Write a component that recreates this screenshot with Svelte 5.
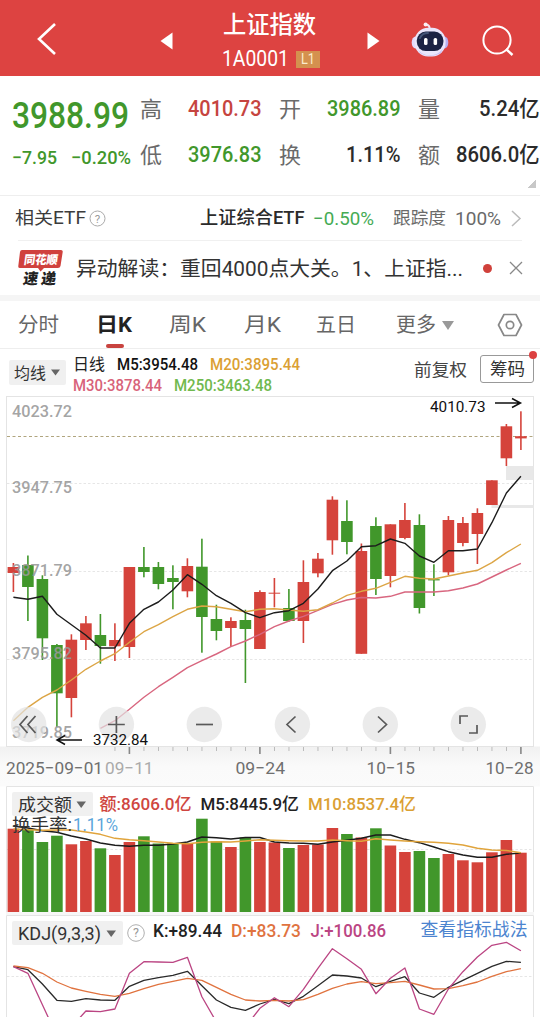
<script>
  const RED = '#d5433b';
  const GREEN = '#41972b';
  const X0 = 13.4;
  const STEP = 14.5;
  const cx = (i) => X0 + STEP * i;

  // direction, body top, body bottom, wick top, wick bottom
  const candles = [
    ['r', 567, 573, 563, 592], ['g', 565, 587, 555.5, 621], ['g', 579, 638.3, 575.3, 660],
    ['g', 645, 693.3, 644, 727], ['r', 639.7, 698, 634.3, 717.3], ['r', 623.3, 640, 616, 650],
    ['g', 635, 646, 614, 663.7], ['r', 640, 646.3, 623.3, 661], ['r', 567, 647, 567, 658],
    ['g', 567, 572, 547, 577.3], ['g', 567, 584, 562, 589.3], ['g', 578, 582, 565.3, 609.3],
    ['r', 566, 591.3, 558.3, 597.3], ['g', 566.7, 617, 538.7, 652.7], ['g', 619, 631, 604.7, 640.3],
    ['r', 621, 628, 617.3, 647], ['g', 620, 629, 609.7, 683], ['r', 592, 649, 590.3, 649],
    ['r', 592.7, 593.7, 578, 607.3], ['g', 608, 621, 589, 621.7], ['r', 582, 621, 560.3, 643],
    ['r', 558.7, 573.3, 553, 577.3], ['r', 499.7, 540.3, 496.3, 554.7], ['g', 521, 542, 500.3, 554.3],
    ['r', 551, 653.8, 543.5, 653.8], ['g', 526, 579, 517.3, 595], ['r', 524.3, 576, 524.3, 587.3],
    ['r', 520, 538, 503, 539.3], ['g', 525, 608, 514.3, 613.5], ['g', 579.2, 580.4, 564.3, 596],
    ['r', 520, 572.3, 516, 575.3], ['r', 523, 543, 517, 546.3], ['r', 513, 534, 508.3, 564],
    ['r', 480.3, 505, 480.3, 505], ['r', 426.3, 458.3, 424, 466], ['r', 436.2, 438.4, 411.3, 450]
  ];
  const ma5 = [597.3, 599.3, 596.3, 614.3, 624.7, 635.3, 648, 648, 623.3, 609.3, 602, 590, 574.7, 584.3, 595.7, 603.3, 612.7, 617.7, 612.7, 610.7, 603.3, 589, 570.7, 561, 546.7, 545.7, 539, 543.3, 556, 562.3, 550.7, 550.7, 549, 522.7, 493, 476.3];
  const ma20 = [720.7, 707.3, 697.3, 690, 680, 669.3, 661, 653.7, 642.3, 631.7, 624.7, 616.7, 609.3, 606, 606.7, 609.3, 611.7, 609.3, 608.7, 610, 611.3, 609.7, 603, 595.3, 591.3, 588.3, 582.3, 576.3, 578.3, 579, 576, 573, 570.3, 562.7, 552.7, 544];
  const ma30 = [728.3, 720.7, 709.3, 697.3, 686.7, 677.3, 667.7, 660.7, 654, 646.7, 641, 634.3, 626.7, 621, 616.3, 610.3, 604.3, 600, 597.5, 598, 596.3, 592, 592, 592, 590.7, 588, 584, 577, 570, 563.3];

  const volumes = [['r', 828.7], ['g', 830], ['g', 842], ['g', 835.7], ['r', 844.3], ['r', 841], ['g', 848.3], ['r', 855], ['r', 842], ['g', 836.3], ['g', 843.5], ['g', 843.5], ['r', 843], ['g', 818.7], ['g', 841.5], ['r', 847], ['g', 837.5], ['r', 842], ['r', 842.5], ['g', 848], ['r', 845], ['r', 844.5], ['r', 828], ['g', 834], ['r', 837.5], ['g', 828.3], ['r', 845.5], ['r', 852], ['g', 851], ['g', 858], ['r', 854], ['r', 860.3], ['r', 862.3], ['r', 852.3], ['r', 840], ['r', 852.7]];
  const vol5 = [826, 828, 830.7, 832.3, 836, 839, 843, 845.3, 846.3, 845.3, 845.3, 844, 842, 837, 837.7, 839, 837.5, 837.5, 842, 843, 843.3, 844.3, 842, 840.3, 838.3, 835, 835, 839.3, 842.7, 847, 851.7, 855, 857.3, 857.3, 854.3, 853];
  const vol10 = [829, 829.7, 830.3, 830, 830, 832, 834.3, 838.3, 839.7, 840.7, 842, 843.3, 843.7, 842.3, 841.7, 842, 841, 839.7, 840.3, 840.7, 841, 841, 840, 840.7, 841.3, 838.7, 840, 841, 841.7, 842.3, 843.3, 845, 848.3, 850, 850.5, 852.7];

  const kLine = [966.7, 969.7, 984, 1000.3, 1001.3, 998.7, 1000, 1000.3, 986.3, 980.3, 977.7, 975.3, 971.3, 985.7, 1000, 1007.3, 1010.3, 1004, 999.3, 1003.7, 996.3, 985.7, 975, 976, 978, 986.7, 981.3, 976.7, 993, 997.3, 987.3, 980.3, 973.3, 966.3, 961.3, 962.3];
  const dLine = [966, 967.7, 973.3, 982, 988, 991.3, 994.3, 996.3, 993.3, 988.7, 984.3, 981.3, 978.3, 980.3, 987.3, 994.3, 1000, 1001, 1000.3, 1001, 999.7, 994.3, 988.3, 984, 981.7, 983.7, 982.7, 981.3, 985, 989, 988.7, 985.7, 982, 976.3, 971.7, 968.7];
  const jLine = [966.7, 973.3, 1004.7, 1036, 1027, 1011, 1011.7, 1009, 973.3, 961.7, 962, 962.3, 957.3, 996.7, 1022, 1032, 1027, 1008.3, 997.7, 1006.7, 989.3, 968.3, 948.7, 958.7, 969.3, 993.7, 978.3, 968, 1009, 1014.3, 989, 971.7, 957, 945.3, 942.3, 950.7];

  const line = (ys, from = 0) => ys.map((y, i) => `${cx(i + from).toFixed(1)},${y}`).join(' ');
  const color = (d) => (d === 'r' ? RED : GREEN);
  const ticks = Array.from({ length: 29 }, (_, i) => i + 7);
  const isMajor = (i) => i === 8 || i === 17 || i === 26 || i === 35;
  const prices = [['4023.72', 411.5], ['3947.75', 487], ['3871.79', 570], ['3795.82', 653.5], ['3719.85', 732.5]];
  const controls = [28.7, 116.4, 204.3, 292.4, 380.3, 468.3];
</script>

{#snippet t(text, w, size, fill, weight = 400)}
  <svg class="t" width={w} height={size} {fill}>
    <text x="0" y={size * 0.855} font-size={size} font-weight={weight} textLength={w} lengthAdjust="spacingAndGlyphs">{text}</text>
  </svg>
{/snippet}

{#snippet ct(text, x, cy, w, size, fill, weight = 400)}
  <text {x} y={cy + size * 0.355} font-size={size} font-weight={weight} {fill} textLength={w} lengthAdjust="spacingAndGlyphs">{text}</text>
{/snippet}

<div class="page">
  <header>
    <svg class="back" width="20" height="34" viewBox="0 0 20 34"><path d="M18 2 2 17 18 32" fill="none" stroke="#fff" stroke-width="2.6" /></svg>
    <svg class="prev" width="13" height="18"><path d="M12.5 0.5V17.5L.5 9z" fill="#fff" /></svg>
    <div class="title">
      {@render t('上证指数', 93, 23.3, '#fff', 500)}
      <div class="code">
        {@render t('1A0001', 67, 21.5, '#fff')}
        <span class="badge">{@render t('L1', 14, 14, '#fbeccd')}</span>
      </div>
    </div>
    <svg class="next" width="13" height="18"><path d="M.5 .5V17.5L12.5 9z" fill="#fff" /></svg>
    <svg class="robot" width="38" height="36" viewBox="0 0 38 36">
      <path d="M18.5 7C19 4.500 17.500 3 15 2.600" fill="none" stroke="#f3e4f2" stroke-width="2" />
      <circle cx="14.600" cy="2.600" r="2" fill="#fbeff4" />
      <ellipse cx="4.500" cy="20.500" rx="3.800" ry="6" fill="#e3d9fb" />
      <ellipse cx="33.500" cy="20.500" rx="3.800" ry="6" fill="#b8aef0" />
      <rect x="3.600" y="5.800" width="31" height="28.600" rx="13.500" fill="#e9e6fb" />
      <path d="M6 26C11 36 28 36 32.500 25L30 31Q19 37 9 31z" fill="#c9bff5" />
      <rect x="5.800" y="9.600" width="26.600" height="19.500" rx="9" fill="#1b2344" />
      <path d="M9 16Q11 11 17 11" fill="none" stroke="#435477" stroke-width="2" stroke-linecap="round" />
      <rect x="13" y="16" width="3.500" height="7" rx="1.500" fill="#fff" />
      <rect x="22.600" y="16" width="3.500" height="7" rx="1.500" fill="#fff" />
    </svg>
    <svg class="search" width="32" height="32" viewBox="0 0 32 32"><circle cx="15" cy="15" r="13.600" fill="none" stroke="#fff" stroke-width="2" /><path d="M24 24 30.500 30" stroke="#fff" stroke-width="2.400" /></svg>
  </header>

  <section class="quote">
    <div class="main">
      {@render t('3988.99', 117, 37, GREEN, 500)}
      <div class="change">
        {@render t('−7.95', 45, 18.5, GREEN, 500)}
        {@render t('−0.20%', 60, 18.5, GREEN, 500)}
      </div>
    </div>
    <div class="stats">
      {@render t('高', 22, 22, '#6a6a6a')}
      <span class="val">{@render t('4010.73', 73.5, 21.2, '#c6443f', 500)}</span>
      {@render t('开', 22, 22, '#6a6a6a')}
      <span class="val">{@render t('3986.89', 73.5, 21.2, GREEN, 500)}</span>
      {@render t('量', 22, 22, '#6a6a6a')}
      <span class="val">{@render t('5.24亿', 60.5, 21.2, '#2b2b2b', 500)}</span>
      {@render t('低', 22, 22, '#6a6a6a')}
      <span class="val">{@render t('3976.83', 73.5, 21.2, GREEN, 500)}</span>
      {@render t('换', 22, 22, '#6a6a6a')}
      <span class="val">{@render t('1.11%', 54.5, 21.2, '#2b2b2b', 500)}</span>
      {@render t('额', 22, 22, '#6a6a6a')}
      <span class="val">{@render t('8606.0亿', 83.5, 21.2, '#2b2b2b', 500)}</span>
    </div>
    <i class="corner"></i>
  </section>

  <section class="etf">
    {@render t('相关ETF', 71, 17.5, '#3c3c3c')}
    <svg class="help" width="17" height="17"><circle cx="8.500" cy="8.500" r="7.500" fill="none" stroke="#aaa" /><text x="8.500" y="12.600" font-size="11.500" text-anchor="middle" fill="#999">?</text></svg>
    <span class="name">{@render t('上证综合ETF', 104.5, 17.8, '#2b2b2b', 500)}</span>
    <span class="pct">{@render t('−0.50%', 61, 19, '#45ab54')}</span>
    <span class="follow">{@render t('跟踪度', 53, 17.6, '#6a6a6a')}</span>
    <span class="full">{@render t('100%', 46, 19, '#6a6a6a')}</span>
    <svg class="go" width="10" height="17"><path d="M1 1 9 8.500 1 16" fill="none" stroke="#bbb" stroke-width="1.500" /></svg>
  </section>

  <section class="news">
    <svg class="logo" width="46" height="38" viewBox="0 0 46 38">
      <path d="M4 1H43Q45 1 44.700 3L42.500 17Q42 19 40 19H26L22.500 22.500 20 19H2Q0 19 .3 17L2 3Q2.300 1 4 1z" fill="#d0413d" />
      <g transform="skewX(-8)" font-weight="800">
        <text x="7.500" y="14.800" font-size="12" textLength="34" lengthAdjust="spacingAndGlyphs" fill="#fff">同花顺</text>
        <text x="9.500" y="35" font-size="15" textLength="33" fill="#222">速递</text>
      </g>
    </svg>
    {@render t('异动解读：重回4000点大关。1、上证指...', 387, 20.8, '#333')}
    <i class="dot"></i>
    <svg class="close" width="14" height="14"><path d="M1 1 13 13M13 1 1 13" stroke="#888" stroke-width="1.300" /></svg>
  </section>

  <nav>
    <span class="tab">{@render t('分时', 41, 20.3, '#666')}</span>
    <span class="tab active">{@render t('日K', 36, 20.3, '#222', 700)}</span>
    <span class="tab">{@render t('周K', 37, 20.3, '#666')}</span>
    <span class="tab">{@render t('月K', 37, 20.3, '#666')}</span>
    <span class="tab">{@render t('五日', 40, 20.3, '#666')}</span>
    <span class="tab more">{@render t('更多', 40, 20.3, '#666')}<svg width="12" height="9"><path d="M0 0H12L6 9z" fill="#999" /></svg></span>
    <svg class="gear" width="26" height="24"><path d="M7 1.500H19L24.500 12 19 22.500H7L1.500 12z" fill="none" stroke="#888" stroke-width="1.700" stroke-linejoin="round" /><circle cx="13" cy="12" r="3.700" fill="none" stroke="#888" stroke-width="1.700" /></svg>
  </nav>

  <section class="legend">
    <span class="pick">{@render t('均线', 32, 16, '#333')}<svg width="9" height="7"><path d="M0 .5H9L4.500 6.500z" fill="#666" /></svg></span>
    <div class="avgs">
      <div class="avg">
        {@render t('日线', 32, 16, '#222')}
        {@render t('M5:3954.48', 81, 15.8, '#111', 500)}
        {@render t('M20:3895.44', 90, 15.8, '#dba033', 500)}
      </div>
      <div class="avg second">
        {@render t('M30:3878.44', 89, 15.8, '#d8637a', 500)}
        {@render t('M250:3463.48', 98, 15.8, '#70b94e', 500)}
      </div>
    </div>
    <span class="adjust">{@render t('前复权', 53, 17.6, '#444')}</span>
    <span class="chips">{@render t('筹码', 35, 17.6, '#333')}<i></i></span>
  </section>

  <svg class="charts" width="540" height="627" viewBox="0 390 540 627">
    <defs>
      <linearGradient id="axis" x1="0" y1="0" x2="0" y2="1"><stop offset="0" stop-color="#f1f1f1" /><stop offset=".5" stop-color="#fafafa" /><stop offset="1" stop-color="#fbfbfb" /></linearGradient>
    </defs>
    <rect x="0" y="746.500" width="540" height="40" fill="url(#axis)" />
    <g fill="none" stroke="#e4e4e4">
      <rect x="6.500" y="396.500" width="527" height="350" />
      <path d="M6.500 912V786.500H533.500V912" />
      <path d="M6.500 1018V915.500H533.500V1018" />
    </g>
    <rect x="6" y="912" width="528" height="3" fill="#f7f7f7" />
    <g stroke="#e6e6e6" stroke-dasharray="2.500 2">
      {#each [483.5, 571.5, 659.5, 849.5, 976.5] as y}
        <path d="M7 {y}H533" />
      {/each}
    </g>

    <rect x="506" y="466" width="27.500" height="14" fill="#e8e8e8" />
    <rect x="491.500" y="505" width="42" height="3" fill="#e8e8e8" />
    <path d="M7 436.500H533" stroke="#b0a57e" stroke-dasharray="3 2.500" />

    {#each candles as [d, top, bottom, high, low], i}
      <rect x={cx(i) - 0.8} y={high} width="1.600" height={low - high} fill={color(d)} />
      <rect x={cx(i) - 5.8} y={top} width="11.600" height={bottom - top} fill={color(d)} />
    {/each}

    {#each prices as [p, y]}
      {@render ct(p, 12, y, 60, 16.6, '#999999e6', 500)}
    {/each}

    <g fill="none" stroke-width="1.400" stroke-linejoin="round">
      <polyline points={line(ma30, 6)} stroke="#d8667f" />
      <polyline points={line(ma20)} stroke="#dca545" />
      <polyline points={line(ma5)} stroke="#1c1c1c" />
    </g>

    {#each controls as x}
      <circle cx={x} cy="724.500" r="17.700" fill="#e2e2e2" fill-opacity=".7" />
    {/each}
    <g fill="none" stroke="#595959" stroke-width="1.700">
      <path d="M27.500 716 20 724.500 27.500 733M35.500 716 28 724.500 35.500 733" />
      <path d="M108 724.500H124.800M116.400 716V733" />
      <path d="M196 724.500H213" />
      <path d="M295.500 716.500 287 724.500 295.500 732.500" />
      <path d="M378 716.500 386.500 724.500 378 732.500" />
      <path d="M460 724V716H468M469 733H477V725" />
    </g>

    <g fill="none" stroke="#111" stroke-width="1.500">
      <path d="M82 740H57M65 735.500 57 740 65 744.500" />
      <path d="M495 403H520M512 398.500 520.500 403 512 407.500" />
    </g>
    {@render ct('3732.84', 93, 740, 55, 15, '#111')}
    {@render ct('4010.73', 430, 406.3, 55.5, 15, '#111')}

    {#each ticks as i}
      <rect x={cx(i) - (isMajor(i) ? 0.8 : 0.4)} y="747" width={isMajor(i) ? 1.6 : 0.9} height={isMajor(i) ? 7 : 4} fill={isMajor(i) ? '#888' : '#b5b5b5'} />
    {/each}
    {@render ct('2025−09−01', 6, 767.5, 97, 17, '#6f6f6f')}
    {@render ct('09−11', 105, 767.5, 48.5, 17, '#aaa')}
    {@render ct('09−24', 235.5, 767.5, 49.5, 17, '#6f6f6f')}
    {@render ct('10−15', 366.5, 767.5, 48.5, 17, '#6f6f6f')}
    {@render ct('10−28', 485.5, 767.5, 48, 17, '#6f6f6f')}

    {#each volumes as [d, top], i}
      <rect x={cx(i) - 5.8} y={top} width="11.600" height={912 - top} fill={color(d)} />
    {/each}
    <g fill="none" stroke-width="1.400" stroke-linejoin="round">
      <polyline points={line(vol5)} stroke="#1c1c1c" />
      <polyline points={line(vol10)} stroke="#e0a43c" />
    </g>
    <rect x="12" y="792" width="81" height="24" rx="2" fill="#f0f0f0" />
    {@render ct('成交额', 18, 804.3, 54, 17.6, '#333')}
    <path d="M76.500 801.500H86L81.200 808z" fill="#666" />
    {@render ct('额:8606.0亿', 99.5, 804.3, 92, 17.2, '#cf4640', 500)}
    {@render ct('M5:8445.9亿', 200.5, 804.3, 98.5, 17.2, '#222', 500)}
    {@render ct('M10:8537.4亿', 308, 804.3, 108, 17.2, '#dba033', 500)}
    {@render ct('换手率:', 12, 824.3, 60, 17.6, '#333')}
    {@render ct('1.11%', 73, 824.5, 45, 18, '#5aa5da')}

    <g fill="none" stroke-width="1.300" stroke-linejoin="round">
      <polyline points={line(kLine)} stroke="#2a2a2a" />
      <polyline points={line(dLine)} stroke="#e0733f" />
      <polyline points={line(jLine)} stroke="#bb4583" />
    </g>
    <rect x="12" y="921" width="111" height="24" rx="2" fill="#f0f0f0" />
    {@render ct('KDJ(9,3,3)', 18, 933.5, 83, 17.5, '#333')}
    <path d="M106.500 930.500H116L111.200 937z" fill="#666" />
    <circle cx="136" cy="933" r="8.300" fill="none" stroke="#b0b0b0" />
    <text x="136" y="937.300" font-size="12.500" text-anchor="middle" fill="#999">?</text>
    {@render ct('K:+89.44', 153, 930.5, 69, 17.5, '#222', 500)}
    {@render ct('D:+83.73', 231, 930.5, 70, 17.5, '#e0733f', 500)}
    {@render ct('J:+100.86', 310.5, 930.5, 75.5, 17.5, '#bb4583', 500)}
    {@render ct('查看指标战法', 420.5, 930, 107, 17.8, '#4c84cf')}
  </svg>
</div>

<style>
  :global(body) { background: #fff; overflow: hidden; }
  .page {
    width: 540px; height: 1017px; overflow: hidden; background: #fff;
    font-family: Roboto, 'Noto Sans CJK SC', sans-serif;
  }
  svg { display: block; flex: none; overflow: visible; }
  header { display: flex; align-items: flex-start; height: 76px; background: #dd4341; box-sizing: border-box; padding: 13px 0 0 37px; }
  .back { margin-top: 9px; }
  .prev { margin: 19px 0 0 103px; }
  .title { width: 98px; margin-left: 49px; padding-left: 1px; box-sizing: border-box; }
  .code { display: flex; align-items: center; gap: 7px; margin-top: 12px; margin-left: -1px; }
  .badge { background: #d4914f; width: 24px; height: 17px; display: flex; align-items: center; justify-content: center; flex: none; }
  .next { margin: 19px 0 0 47px; }
  .robot { margin: 9px 0 0 31px; }
  .search { margin: 12px 0 0 33px; }

  .quote { display: flex; align-items: flex-start; height: 119px; border-bottom: 1px solid #eee; padding-left: 12px; position: relative; }
  .main { width: 128px; padding-top: 20px; flex: none; }
  .change { display: flex; gap: 14px; margin-top: 15px; }
  .stats { display: grid; grid-template-columns: 22px 99px 40px 99px 40px 99px; grid-template-rows: 46px 46px; align-items: center; padding-top: 10px; }
  .stats > :global(:nth-child(6n + 3)), .stats > :global(:nth-child(6n + 5)) { justify-self: end; }
  .stats .val { justify-self: end; }
  .corner { position: absolute; right: 4px; bottom: 7px; width: 9px; height: 9px; background: linear-gradient(135deg, transparent 50%, #c8c8c8 50%); }

  .etf { display: flex; align-items: center; height: 44px; margin: 0 18px; border-bottom: 1px solid #f0f0f0; }
  .etf > :global(:first-child) { margin-left: -3px; }
  .help { margin-left: 3px; }
  .name { margin-left: 94px; }
  .pct { margin-left: 8px; }
  .follow { margin-left: 19px; }
  .full { margin-left: 9px; }
  .go { margin-left: 10px; }

  .news { display: flex; align-items: center; height: 54px; padding-left: 18px; border-bottom: 6px solid #f5f5f5; }
  .logo { margin-right: 12px; }
  .dot { width: 9px; height: 9px; border-radius: 50%; background: #d0413b; margin-left: 20px; }
  .close { margin-left: 17px; }

  nav { display: flex; align-items: center; height: 47px; border-bottom: 1px solid #eee; padding-left: 18px; }
  .tab { position: relative; display: flex; align-items: center; height: 47px; margin-right: 37px; padding-top: 2px; box-sizing: border-box; }
  .tab.active::after { content: ''; position: absolute; left: 10px; bottom: 0; width: 18px; height: 4px; border-radius: 2px; background: #c8433f; }
  .tab:nth-child(3) { margin-right: 38px; }
  .tab:nth-child(4) { margin-right: 35px; }
  .tab:nth-child(5) { margin-right: 40px; }
  .more { gap: 6px; margin-right: 43px; }

  .legend { display: flex; height: 41px; padding-left: 9px; }
  .pick { display: flex; align-items: center; gap: 5px; width: 57px; height: 25px; margin-top: 11px; padding-left: 5px; box-sizing: border-box; background: #f0f0f0; border-radius: 2px; flex: none; }
  .avgs { width: 228px; margin: 7px 0 0 7px; flex: none; }
  .avg { display: flex; align-items: center; gap: 12px; height: 16px; }
  .avg.second { margin-top: 5px; }
  .adjust { margin: 12px 0 0 113px; }
  .chips { position: relative; display: flex; align-items: center; justify-content: center; width: 54px; height: 28px; box-sizing: border-box; border: 1px solid #999; border-radius: 3px; margin: 6px 0 0 13px; }
  .chips i { position: absolute; right: -4px; top: -5px; width: 8px; height: 8px; border-radius: 50%; background: #dc4141; }
</style>
